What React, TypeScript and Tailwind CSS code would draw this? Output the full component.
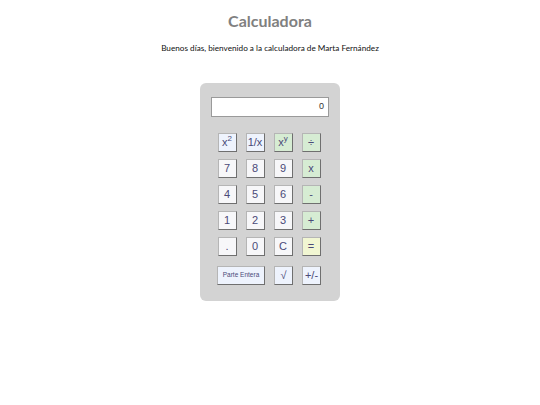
const KEYS: { label: React.ReactNode; tone: string }[][] = [
  [
    { label: <>x<sup className="text-[8px]">2</sup></>, tone: "fn" },
    { label: "1/x", tone: "fn" },
    { label: <>x<sup className="text-[8px]">y</sup></>, tone: "op" },
    { label: "÷", tone: "op" },
  ],
  [
    { label: "7", tone: "num" },
    { label: "8", tone: "num" },
    { label: "9", tone: "num" },
    { label: "x", tone: "op" },
  ],
  [
    { label: "4", tone: "num" },
    { label: "5", tone: "num" },
    { label: "6", tone: "num" },
    { label: "-", tone: "op" },
  ],
  [
    { label: "1", tone: "num" },
    { label: "2", tone: "num" },
    { label: "3", tone: "num" },
    { label: "+", tone: "op" },
  ],
  [
    { label: ".", tone: "num" },
    { label: "0", tone: "num" },
    { label: "C", tone: "num" },
    { label: "=", tone: "eq" },
  ],
];

const TONES: Record<string, string> = {
  num: "bg-[#f7f7f9]",
  fn: "bg-[#eef3fd]",
  op: "bg-[#d6ecd3]",
  eq: "bg-[#f1f6d2]",
};

const btn =
  "h-[19px] flex items-center justify-center border border-t-[#b5b5b5] border-l-[#b5b5b5] border-b-[#6f6f6f] border-r-[#6f6f6f] text-[#4a4a78] leading-none whitespace-nowrap";

export default function App() {
  return (
    <div className="w-[540px] min-h-[405px] bg-white flex flex-col items-center" style={{ fontFamily: "Lato, 'Liberation Sans', sans-serif" }}>
      <h1 className="mt-[9px] text-[16px] font-bold text-[#808080] leading-[24px]">Calculadora</h1>
      <p className="mt-[9px] text-[8.2px] text-[#111] leading-[12px]">
        Buenos días, bienvenido a la calculadora de Marta Fernández
      </p>

      {/* calculadora */}
      <div className="mt-[29px] w-[140px] bg-[#d3d3d3] rounded-[6px] pt-[14px] pb-[16px] flex flex-col items-center" style={{ fontFamily: "'Liberation Sans', Arial, sans-serif" }}>
        <div className="w-[118px] h-[20px] bg-white border border-[#9a9a9a] flex items-center justify-end pr-[4px] text-[9px] text-[#333]">
          0
        </div>

        <div className="mt-[16px] -ml-[2px] grid grid-cols-4 gap-x-[9px] gap-y-[7px]">
          {KEYS.flat().map((k, i) => (
            <button key={i} className={`w-[19px] text-[11px] ${btn} ${TONES[k.tone]}`}>
              {k.label}
            </button>
          ))}
        </div>

        <div className="mt-[10px] -ml-[2px] flex gap-[9px]">
          <button className={`w-[48px] text-[6.5px] ${btn} bg-[#eef3fd]`}>Parte Entera</button>
          <button className={`w-[19px] text-[11px] ${btn} bg-[#eef3fd]`}>√</button>
          <button className={`w-[19px] text-[11px] ${btn} bg-[#eef3fd]`}>+/-</button>
        </div>
      </div>
    </div>
  );
}
